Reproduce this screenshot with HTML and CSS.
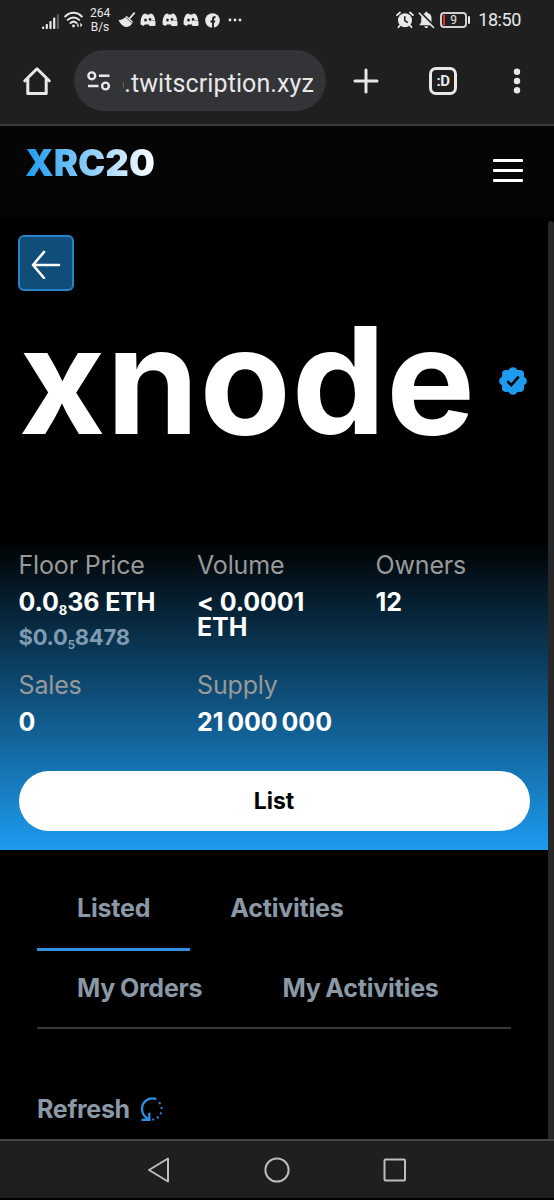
FILE: index.html
```
<!DOCTYPE html>
<html lang="en">
<head>
    <meta charset="UTF-8">
    <meta name="viewport" content="width=device-width, initial-scale=1.0">
    <title>XRC20 - xnode</title>
    <link rel="stylesheet" href="styles.css">
</head>
<body>
    <svg class="sprite">
        <symbol id="discord" viewBox="0 0 16 14">
            <path d="M3.500 1 6 .4l.6 1h2.800l.6-1 2.500.6C14.500 3.500 15 5.500 15.200 7.500H9v4H4.800L3.600 13 .6 11.500C.3 7 1.200 3.500 3.500 1Z" fill="#e8e8e8"/>
            <ellipse cx="5.500" cy="7" rx="1.300" ry="1.500" fill="#1f1f1f"/>
            <ellipse cx="10" cy="6.300" rx="1.200" ry="1.300" fill="#1f1f1f"/>
            <rect x="9" y="7.700" width="6.500" height="5.300" rx="1" fill="#e8e8e8"/>
        </symbol>
    </svg>

    <div class="status-bar">
        <svg class="signal" width="18" height="18" viewBox="0 0 18 18" fill="#e8e8e8">
            <rect x="0" y="13.500" width="2.200" height="2.500" rx=".8"/>
            <rect x="3.700" y="11" width="2.200" height="5" rx=".8"/>
            <rect x="7.400" y="8" width="2.200" height="8" rx=".8"/>
            <rect x="11.100" y="4.500" width="2.200" height="11.500" rx=".8"/>
            <rect x="14.800" y="1" width="2.200" height="15" rx=".8" fill="#5c5c5c"/>
        </svg>
        <svg class="wifi" width="20" height="18" viewBox="0 0 20 18" fill="none" stroke="#e8e8e8" stroke-width="2" stroke-linecap="round">
            <path d="M1.200 5.500C6 .6 13 .6 17.800 5.500M3.800 8.900c3.300-3.300 8-3.300 11.400 0M6.500 12c1.800-1.700 4.200-1.700 6 0"/>
            <circle cx="9.500" cy="15" r="1.400" fill="#e8e8e8" stroke="none"/>
            <path d="M14.500 12v4.400l-2-2.200ZM16.300 11.800v4.400l2.200-2.200Z" fill="#e8e8e8" stroke="none"/>
        </svg>
        <div class="net-speed"><span>264</span><span>B/s</span></div>
        <svg class="broom" width="18" height="16" viewBox="0 0 18 16">
            <path d="M16.200 1.200 12 6" stroke="#e8e8e8" stroke-width="1.800" stroke-linecap="round"/>
            <path d="M8.500 3.800 14.800 9.500C14 13 11 15.200 7.500 15 4.500 14 2 11.500.6 8 4 8 7 6.500 8.500 3.800Z" fill="#e8e8e8"/>
            <path d="m7.500 5 6.500 6" stroke="#1f1f1f" stroke-width=".7"/>
        </svg>
        <svg class="discord" width="16" height="14"><use href="#discord"/></svg>
        <svg class="discord" width="16" height="14"><use href="#discord"/></svg>
        <svg class="discord" width="16" height="14"><use href="#discord"/></svg>
        <svg class="facebook" width="15" height="15" viewBox="0 0 15 15">
            <circle cx="7.500" cy="7.500" r="7.300" fill="#e8e8e8"/>
            <path d="M8 15V6.300C8 4.800 8.700 4 10.500 4M5.500 8.500h4.700" fill="none" stroke="#1f1f1f" stroke-width="1.900"/>
        </svg>
        <svg class="more" width="14" height="4" viewBox="0 0 14 4" fill="#e8e8e8">
            <circle cx="2" cy="2" r="1.400"/><circle cx="7" cy="2" r="1.400"/><circle cx="12" cy="2" r="1.400"/>
        </svg>
        <div class="status-right">
            <svg width="18" height="18" viewBox="0 0 18 18">
                <circle cx="9" cy="9.200" r="7" fill="#e8e8e8"/>
                <path d="M1 4.200 4 1.500M17 4.200 14 1.500M3.800 14.500l-1.300 1.800M14.200 14.500l1.300 1.800" stroke="#e8e8e8" stroke-width="1.800" stroke-linecap="round"/>
                <path d="M8.800 5.200v4.300l3 2.200" fill="none" stroke="#1f1f1f" stroke-width="1.500"/>
            </svg>
            <svg width="17" height="18" viewBox="0 0 17 18">
                <path d="M8.300.8c.8 0 1.200.5 1.200 1.200 2.800.6 4 2.600 4 5.200v4l2 3H1.200l2-3v-4c0-2.600 1.300-4.600 4-5.200 0-.7.400-1.200 1.100-1.200ZM6.300 15.200h4c-.2 1.200-1 1.800-2 1.800s-1.800-.6-2-1.800Z" fill="#e8e8e8"/>
                <path d="M2.500 1.200 17 16" stroke="#1f1f1f" stroke-width="1.800"/>
                <path d="M1.300 2.200 15.500 16.500" stroke="#e8e8e8" stroke-width="1.600" stroke-linecap="round"/>
            </svg>
            <div class="battery"><i></i><span>9</span></div>
            <span class="time">18:50</span>
        </div>
    </div>

    <div class="browser-bar">
        <svg class="home" width="28" height="30" viewBox="0 0 28 30" fill="none" stroke="#e8e8e8" stroke-width="3" stroke-linecap="round" stroke-linejoin="round">
            <path d="M1.800 14.800 14 2.800l12.200 12M4.800 13v14.500h18.400V13"/>
        </svg>
        <div class="address">
            <svg width="24" height="20" viewBox="0 0 24 20" fill="none" stroke="#e8e8e8" stroke-width="2.400">
                <circle cx="4.800" cy="4.800" r="3.400"/>
                <path d="M12 4.800h10.500M1 15h10.500"/>
                <circle cx="18.500" cy="15" r="3.400"/>
            </svg>
            <div class="url"><span>o.twitscription.xyz</span></div>
        </div>
        <svg class="plus" width="26" height="26" viewBox="0 0 26 26" stroke="#e8e8e8" stroke-width="3" stroke-linecap="round">
            <path d="M13 2v22M2 13h22"/>
        </svg>
        <div class="tab-count">:D</div>
        <svg class="kebab" width="8" height="26" viewBox="0 0 8 26" fill="#e8e8e8">
            <circle cx="4" cy="3.700" r="3.200"/><circle cx="4" cy="13" r="3.200"/><circle cx="4" cy="22.300" r="3.200"/>
        </svg>
    </div>

    <div class="viewport">
        <header class="header">
            <div class="logo">XRC20</div>
            <div class="menu"><i></i><i></i><i></i></div>
        </header>

        <div class="scroll-area">
            <main>
                <section class="hero">
                    <div class="back">
                        <svg width="30" height="30" viewBox="0 0 30 30" fill="none" stroke="#fff" stroke-width="2.600" stroke-linecap="round" stroke-linejoin="round">
                            <path d="M28 16H2M13 3 2 16l11 13"/>
                        </svg>
                    </div>
                    <div class="title">
                        <h1>xnode</h1>
                        <svg width="28" height="28" viewBox="0 0 28 28">
                            <g fill="#1d9bf0">
                                <circle cx="14" cy="14" r="12"/>
                                <circle cx="14" cy="4.300" r="4.100"/><circle cx="20.900" cy="7.100" r="4.100"/>
                                <circle cx="23.700" cy="14" r="4.100"/><circle cx="20.900" cy="20.900" r="4.100"/>
                                <circle cx="14" cy="23.700" r="4.100"/><circle cx="7.100" cy="20.900" r="4.100"/>
                                <circle cx="4.300" cy="14" r="4.100"/><circle cx="7.100" cy="7.100" r="4.100"/>
                            </g>
                            <path d="m8.300 14.200 4 4 7.400-8.500" fill="none" stroke="#000" stroke-width="2.600"/>
                        </svg>
                    </div>
                </section>

                <section class="info">
                    <div class="stats">
                        <div class="stat">
                            <label>Floor Price</label>
                            <b>0.0<small>8</small>36 ETH</b>
                            <em>$0.0<small>5</small>8478</em>
                        </div>
                        <div class="stat">
                            <label>Volume</label>
                            <b>&lt; 0.0001 ETH</b>
                        </div>
                        <div class="stat">
                            <label>Owners</label>
                            <b>12</b>
                        </div>
                        <div class="stat">
                            <label>Sales</label>
                            <b>0</b>
                        </div>
                        <div class="stat">
                            <label>Supply</label>
                            <b class="supply"><span>21</span><span>000</span><span>000</span></b>
                        </div>
                    </div>
                    <button class="list-btn">List</button>
                </section>

                <nav class="tabs">
                    <div class="tab active">Listed</div>
                    <div class="tab">Activities</div>
                    <div class="tab">My Orders</div>
                    <div class="tab">My Activities</div>
                </nav>

                <div class="refresh">
                    <span>Refresh</span>
                    <svg width="24" height="25" viewBox="0 0 24 26" fill="none" stroke="#2f8fe0" stroke-width="2.400">
                        <path d="M16.500 2.200C8-.5 1.500 5.500 1.600 12.500c0 4.500 2.400 8 6.600 10.700M1.200 23.800h8v-7.500"/>
                        <g fill="#2f8fe0" stroke="none">
                            <circle cx="20" cy="6.500" r="1.200"/><circle cx="22" cy="11.500" r="1.200"/>
                            <circle cx="21.200" cy="17" r="1.200"/><circle cx="18" cy="21.300" r="1.200"/>
                            <circle cx="13.300" cy="23.500" r="1.200"/>
                        </g>
                    </svg>
                </div>
            </main>
            <div class="scrollbar"></div>
        </div>
    </div>

    <div class="nav-bar">
        <svg width="24" height="28" viewBox="0 0 24 28"><path d="M21 2.500v23L2 14Z"/></svg>
        <svg width="26" height="28" viewBox="0 0 26 28"><circle cx="13" cy="14" r="11.600"/></svg>
        <svg width="24" height="28" viewBox="0 0 24 28"><rect x="1.500" y="3.500" width="20.500" height="21" rx="1"/></svg>
    </div>
</body>
</html>
```
FILE: styles.css
```
:root {
    --bar: #1f1f1f;
    --icon: #e8e8e8;
    --blue: #1d9bf0;
    --muted: #8b98a5;
}

* {
    margin: 0;
    padding: 0;
    box-sizing: border-box;
}

body {
    width: 554px;
    height: 1200px;
    overflow: hidden;
    display: flex;
    flex-direction: column;
    background: #000;
    color: #fff;
    font-family: Inter, "Liberation Sans", sans-serif;
}

svg {
    display: block;
    flex-shrink: 0;
}

.sprite {
    display: none;
}

/* phone status bar */
.status-bar {
    height: 40px;
    flex-shrink: 0;
    display: flex;
    align-items: center;
    padding-left: 42px;
    padding-right: 33px;
    background: var(--bar);
    color: var(--icon);
    font-family: Roboto, sans-serif;
}

.signal {
    margin-top: 3px;
}

.wifi {
    margin-left: 4px;
}

.net-speed {
    display: flex;
    flex-direction: column;
    align-items: center;
    width: 20px;
    margin-left: 6px;
    font-size: 12px;
    line-height: 14px;
}

.broom {
    margin-left: 8px;
    margin-right: 4px;
}

.discord {
    margin-right: 5.5px;
}

.facebook {
    margin-left: 0.5px;
}

.more {
    margin-left: 8px;
}

.status-right {
    display: flex;
    align-items: center;
    margin-left: auto;
}

.status-right svg + svg {
    margin-left: 4px;
}

.battery {
    position: relative;
    width: 27px;
    height: 16px;
    margin-left: 5px;
    border: 2px solid #d0d0d0;
    border-radius: 4px;
    display: flex;
    align-items: center;
    justify-content: center;
    font-size: 12px;
}

.battery i {
    position: absolute;
    left: 1px;
    top: 1px;
    width: 2px;
    height: 10px;
    background: #d8361f;
}

.battery::after {
    content: "";
    position: absolute;
    right: -5px;
    top: 2px;
    width: 2px;
    height: 8px;
    border-radius: 1px;
    background: var(--icon);
}

.time {
    margin-left: 11px;
    font-size: 18px;
    line-height: 20px;
    letter-spacing: -0.4px;
}

/* browser toolbar */
.browser-bar {
    height: 86px;
    flex-shrink: 0;
    display: flex;
    align-items: center;
    padding: 0 33px 3px 23px;
    background: var(--bar);
    border-bottom: 2px solid #3c3c3c;
}

.home {
    margin-top: 1px;
}

.address {
    width: 252px;
    height: 61px;
    margin-left: 23px;
    padding-left: 13px;
    display: flex;
    align-items: center;
    border-radius: 31px;
    background: #333438;
}

.url {
    width: 191px;
    margin-left: 12px;
    margin-top: 6px;
    display: flex;
    justify-content: flex-end;
    overflow: hidden;
    color: var(--icon);
    font-family: Roboto, sans-serif;
    font-size: 25px;
    line-height: 32px;
    letter-spacing: 0.1px;
}

.plus {
    margin-left: 27px;
}

.tab-count {
    width: 28px;
    height: 28px;
    margin-left: 50px;
    border: 3px solid var(--icon);
    border-radius: 7px;
    color: var(--icon);
    font: bold 15px/22px Roboto, sans-serif;
    letter-spacing: -0.5px;
    text-align: center;
}

.kebab {
    margin-left: auto;
}

/* page */
.viewport {
    height: 1013px;
    flex-shrink: 0;
    overflow: hidden;
}

.header {
    height: 91px;
    display: flex;
    justify-content: space-between;
    padding: 19px 31px 0 25px;
    background: #050505;
}

.logo {
    height: 38px;
    font-size: 36.5px;
    font-weight: 900;
    line-height: 37px;
    background: linear-gradient(90deg, #1d9bf0, #fff);
    -webkit-background-clip: text;
    background-clip: text;
    color: transparent;
}

.menu {
    display: flex;
    flex-direction: column;
    gap: 7px;
    width: 30px;
    padding-top: 14px;
}

.menu i {
    height: 3px;
    border-radius: 1px;
    background: #fff;
}

.scroll-area {
    display: flex;
}

main {
    width: 548px;
}

.scrollbar {
    width: 6px;
    height: 918px;
    margin-top: 4px;
    border-radius: 3px 3px 0 0;
    background: #272727;
}

.hero {
    height: 323px;
    padding: 18px 18px 0;
}

.back {
    width: 56px;
    height: 56px;
    padding-top: 2px;
    display: flex;
    align-items: center;
    justify-content: center;
    border: 2px solid #2583ca;
    border-radius: 6px;
    background: #104d78;
}

.title {
    display: flex;
    align-items: center;
    justify-content: space-between;
    height: 179px;
    padding-left: 1px;
    padding-right: 3px;
}

.title h1 {
    margin-top: -2px;
    font-size: 149px;
    font-weight: 700;
    line-height: 180px;
    letter-spacing: 0.7px;
}

.info {
    height: 310px;
    padding: 12px 18.5px 0;
    background: linear-gradient(#000, #1d9bf0);
}

.stats {
    display: grid;
    grid-template-columns: repeat(3, 178.5px);
    grid-template-rows: 120px 99px;
}

.stat {
    display: flex;
    flex-direction: column;
    padding-right: 24px;
}

.stat label {
    color: #999;
    font-size: 25px;
    line-height: 26px;
    letter-spacing: -0.15px;
}

.stat b {
    margin-top: 12px;
    font-size: 25px;
    font-weight: 700;
    line-height: 25px;
    letter-spacing: -0.1px;
    white-space: nowrap;
}

.stat:nth-child(2) b {
    white-space: normal;
}

.stat em {
    margin-top: 10px;
    color: #7f9bb2;
    font-size: 22px;
    font-style: normal;
    font-weight: 700;
    line-height: 25px;
    letter-spacing: -0.25px;
}

.stat small {
    font-size: 0.52em;
    line-height: 0;
    position: relative;
    top: 4px;
}

.supply {
    display: flex;
    gap: 4px;
}

.list-btn {
    display: block;
    width: 511px;
    height: 60px;
    border: none;
    border-radius: 30px;
    background: #fff;
    color: #000;
    font: 700 23px/60px Inter, sans-serif;
}

.tabs {
    display: flex;
    flex-wrap: wrap;
    margin: 20px 37px 0;
    border-bottom: 2px solid #383838;
}

.tab {
    height: 76px;
    padding: 0 40px;
    border-bottom: 3px solid transparent;
    color: var(--muted);
    font-size: 25px;
    font-weight: 700;
    line-height: 74px;
    letter-spacing: -0.2px;
    word-spacing: -1px;
}

.tab.active {
    height: 81px;
    border-bottom-color: #3190e0;
}

.tab.active,
.tab.active + .tab {
    line-height: 77px;
}

.refresh {
    display: flex;
    align-items: center;
    gap: 10px;
    margin: 65px 37px 0;
    color: var(--muted);
    font-size: 25px;
    font-weight: 700;
    line-height: 30px;
    letter-spacing: -0.3px;
}

/* phone navigation */
.nav-bar {
    height: 61px;
    display: flex;
    justify-content: center;
    gap: 93px;
    padding-top: 15px;
    background: var(--bar);
    border-top: 2px solid #444;
    border-bottom: 2px solid #000;
}

.nav-bar svg {
    fill: none;
    stroke: #bdbdbd;
    stroke-width: 2;
    stroke-linejoin: round;
}
```
